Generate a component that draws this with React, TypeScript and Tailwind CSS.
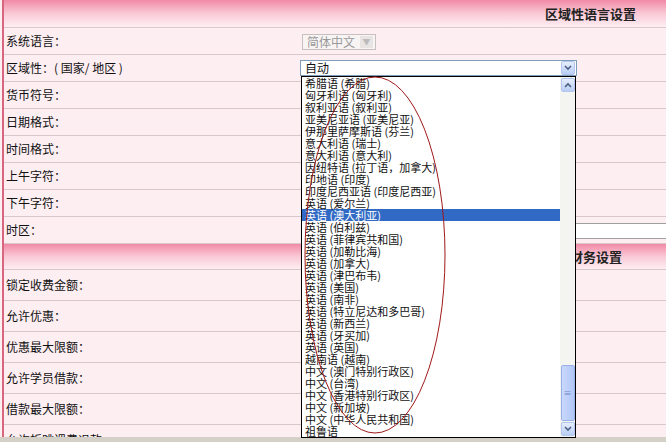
const font = { fontFamily: '"Noto Sans CJK SC", sans-serif' }

const rows1 = ['系统语言：', '区域性：( 国家/ 地区 )', '货币符号：', '日期格式：', '时间格式：', '上午字符：', '下午字符：', '时区：']
const rows2 = ['锁定收费金额：', '允许优惠：', '优惠最大限额：', '允许学员借款：', '借款最大限额：', '允许折跳课费退款：']
const items = [
  '希腊语 (希腊)', '匈牙利语 (匈牙利)', '叙利亚语 (叙利亚)', '亚美尼亚语 (亚美尼亚)', '伊那里萨摩斯语 (芬兰)',
  '意大利语 (瑞士)', '意大利语 (意大利)', '因纽特语 (拉丁语，加拿大)', '印地语 (印度)', '印度尼西亚语 (印度尼西亚)',
  '英语 (爱尔兰)', '英语 (澳大利亚)', '英语 (伯利兹)', '英语 (菲律宾共和国)', '英语 (加勒比海)', '英语 (加拿大)',
  '英语 (津巴布韦)', '英语 (美国)', '英语 (南非)', '英语 (特立尼达和多巴哥)', '英语 (新西兰)', '英语 (牙买加)',
  '英语 (英国)', '越南语 (越南)', '中文 (澳门特别行政区)', '中文 (台湾)', '中文 (香港特别行政区)', '中文 (新加坡)',
  '中文 (中华人民共和国)', '祖鲁语',
]

function Band({ title, h, pr }: { title: string; h: string; pr: string }) {
  return (
    <div className={`${h} bg-gradient-to-b from-[#f08aa6] via-[#f9c9d6] to-[#fdeef2] border-b border-[#d8c8cc] flex items-center justify-end ${pr}`}>
      <span className="text-[13px] font-bold text-[#222]">{title}</span>
    </div>
  )
}

function Chevron({ up }: { up?: boolean }) {
  return (
    <div className="w-[14px] h-[14px] bg-gradient-to-b from-[#e6eefc] to-[#b9cdf5] border border-[#b3c6ef] rounded-[2px] flex items-center justify-center">
      <svg width="8" height="6" viewBox="0 0 8 6"><path d={up ? 'M1 5 L4 2 L7 5' : 'M1 1 L4 4 L7 1'} stroke="#4d6185" strokeWidth="1.6" fill="none" /></svg>
    </div>
  )
}

export default function App() {
  return (
    <div className="w-[666px] h-[442px] overflow-hidden relative bg-[#fdeef2] text-[12px] text-[#111]" style={font}>
      <div className="ml-[2px] border-l-2 border-[#d8667f] h-full">
        <Band title="区域性语言设置" h="h-[28px]" pr="pr-[30px]" />
        {rows1.map((r, i) => (
          <div key={i} className="h-[27px] border-b border-[#d8c8cc] flex items-center pl-[2px] relative">
            {r}
            {i === 0 && (
              <div className="absolute left-[298px] top-[6px] h-[16px] w-[74px] border border-[#c8c0c0] bg-[#f8f4f4] text-[#999] flex items-center pl-1 justify-between pr-[2px]">
                简体中文 <span className="w-[13px] h-[12px] bg-[#e8e4e4] text-[8px] text-[#bbb] flex items-center justify-center">▼</span>
              </div>
            )}
            {i === 7 && <div className="absolute left-[298px] top-[6px] h-[16px] w-[370px] border border-[#a0a0a0] bg-white" />}
          </div>
        ))}
        <Band title="财务设置" h="h-[26px]" pr="pr-[44px]" />
        {rows2.map((r, i) => (
          <div key={i} className="h-[31px] border-b border-[#d8c8cc] flex items-center pl-[2px]">{r}</div>
        ))}
      </div>
      <div className="absolute left-0 right-0 bottom-0 h-[5px] bg-[#d4d0c8]" />

      {/* select + dropdown list */}
      <div className="absolute left-[300px] top-[60px] w-[277px] h-[16px] border border-[#7f9db9] bg-white flex items-center justify-between pl-[4px] pr-[1px]">
        <span>自动</span>
        <Chevron />
      </div>
      <div className="absolute left-[301px] top-[76px] w-[275px] h-[362px] border border-black bg-white flex">
        <div className="flex-1 overflow-hidden">
          {items.map((t, i) => (
            <div key={i} className={`h-[12px] leading-[12px] pl-[3px] whitespace-nowrap text-[11px] ${i === 11 ? 'bg-[#316ac5] text-white' : ''}`}>{t}</div>
          ))}
        </div>
        <div className="w-[15px] bg-[#f4f4f0] flex flex-col items-center py-[1px]">
          <Chevron up />
          <div className="flex-1" />
          <div className="w-[14px] h-[56px] bg-gradient-to-r from-[#c9d8fb] to-[#b2c7f6] border border-[#98b0e8] rounded-[2px] flex items-center justify-center text-[8px] text-[#6c88c8] mb-[1px]">≡</div>
          <Chevron />
        </div>
      </div>
      <svg className="absolute left-0 top-0 pointer-events-none" width="666" height="442">
        <ellipse cx="375" cy="255" rx="70" ry="178" fill="none" stroke="#a01818" strokeWidth="1" />
      </svg>
    </div>
  )
}
